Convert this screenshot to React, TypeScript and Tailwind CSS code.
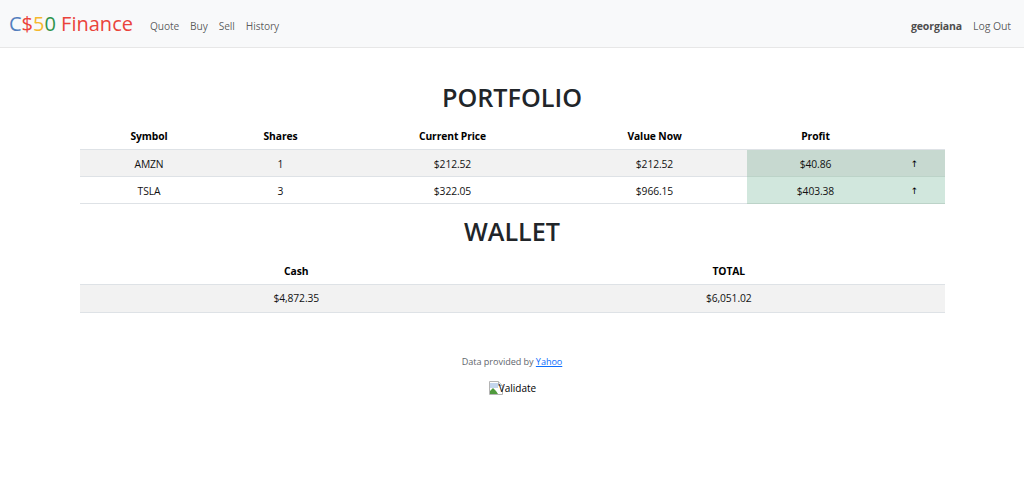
const FONT = "font-['Open_Sans','Noto_Sans',sans-serif]";

const NAV_LINKS = ['Quote', 'Buy', 'Sell', 'History'];

const HOLDINGS = [
  { symbol: 'AMZN', shares: 1, price: '$212.52', value: '$212.52', profit: '$40.86', striped: true },
  { symbol: 'TSLA', shares: 3, price: '$322.05', value: '$966.15', profit: '$403.38', striped: false },
];

function Navbar() {
  return (
    <nav className="h-12 flex items-center bg-[#f8f9fa] border-b border-[#e7e7e7] pl-[9px] pr-[13px]">
      <a className="text-[20px] leading-none whitespace-pre">
        <span className="text-[#537fbe]">C</span>
        <span className="text-[#ea433b]">$</span>
        <span className="text-[#f5b82e]">5</span>
        <span className="text-[#2e944b]">0</span>
        <span className="text-[#ea433b]"> Finance</span>
      </a>
      <ul className="flex gap-[11px] ml-[17px] pt-[7px] text-[10.2px] tracking-[-0.1px] text-[#000000a6]">
        {NAV_LINKS.map((link) => (
          <li key={link}>{link}</li>
        ))}
      </ul>
      <div className="ml-auto flex gap-[11px] pt-[7px] text-[10.5px] tracking-[-0.1px] text-[#000000a6]">
        <span className="font-bold text-[#4d4d4d]">georgiana</span>
        <span>Log Out</span>
      </div>
    </nav>
  );
}

function BrokenImage() {
  return (
    <svg width="16" height="16" viewBox="0 0 16 16" className="shrink-0 -mr-[5px]">
      <path d="M1.5 1.5h9l4 4v9h-13z" fill="#fff" stroke="#b4b4b4" />
      <path d="M10.5 1.5v4h4" fill="#e8e8e8" stroke="#b4b4b4" />
      <path d="M2 3h8v5H2z" fill="#c4d6ee" />
      <path d="M2 14v-3l3-3 3 3 2 3z" fill="#4f9a3c" />
    </svg>
  );
}

export default function App() {
  return (
    <div className={`${FONT} h-[481px] bg-white text-[#212529] overflow-hidden`}>
      <Navbar />

      <main className="px-20 pt-[30px] text-center">
        <h1 className="text-[25.2px] font-semibold leading-[38px]">PORTFOLIO</h1>

        <table className="w-[865px] table-fixed border-collapse text-[10.3px] tracking-[-0.1px] text-[#111] mt-[7px]">
          <colgroup>
            <col className="w-[138px]" />
            <col className="w-[125px]" />
            <col className="w-[219px]" />
            <col className="w-[185px]" />
            <col className="w-[137px]" />
            <col className="w-[61px]" />
          </colgroup>
          <thead>
            <tr className="h-[26px] border-b border-[#dee2e6] text-black [&>th]:pt-[2px]">
              <th>Symbol</th>
              <th>Shares</th>
              <th>Current Price</th>
              <th>Value Now</th>
              <th>Profit</th>
              <th></th>
            </tr>
          </thead>
          <tbody>
            {HOLDINGS.map((row) => (
              <tr key={row.symbol} className={`h-[27px] border-b border-[#dee2e6] [&>td]:pt-[4px] ${row.striped ? 'bg-[#f2f2f2]' : 'bg-white'}`}>
                <td>{row.symbol}</td>
                <td>{row.shares}</td>
                <td>{row.price}</td>
                <td>{row.value}</td>
                <td className={`border-b border-[#bcd3c8] ${row.striped ? 'bg-[#c7d9d0]' : 'bg-[#d1e7dd]'}`}>{row.profit}</td>
                <td className={`border-b border-[#bcd3c8] font-['DejaVu_Sans',sans-serif] text-[9px] text-black ${row.striped ? 'bg-[#c7d9d0]' : 'bg-[#d1e7dd]'}`}>↑</td>
              </tr>
            ))}
          </tbody>
        </table>

        <h1 className="text-[25.2px] font-semibold leading-[38px] mt-[8px]">WALLET</h1>

        <table className="w-[865px] table-fixed border-collapse text-[10.3px] tracking-[-0.1px] text-[#111] mt-[7px]">
          <thead>
            <tr className="h-[28px] border-b border-[#dee2e6] text-black [&>th]:pt-[2px]">
              <th>Cash</th>
              <th>TOTAL</th>
            </tr>
          </thead>
          <tbody>
            <tr className="h-[28px] border-b border-[#dee2e6] bg-[#f2f2f2]">
              <td>$4,872.35</td>
              <td>$6,051.02</td>
            </tr>
          </tbody>
        </table>

        <p className="mt-[42px] text-[9.1px] tracking-[-0.05px] leading-[14px] text-[#5f666d]">
          Data provided by <a className="text-[#0d6efd] underline">Yahoo</a>
        </p>
        <div className="mt-[11px] flex justify-center items-center text-[10px] leading-4 text-black">
          <BrokenImage />
          <span>Validate</span>
        </div>
      </main>
    </div>
  );
}
